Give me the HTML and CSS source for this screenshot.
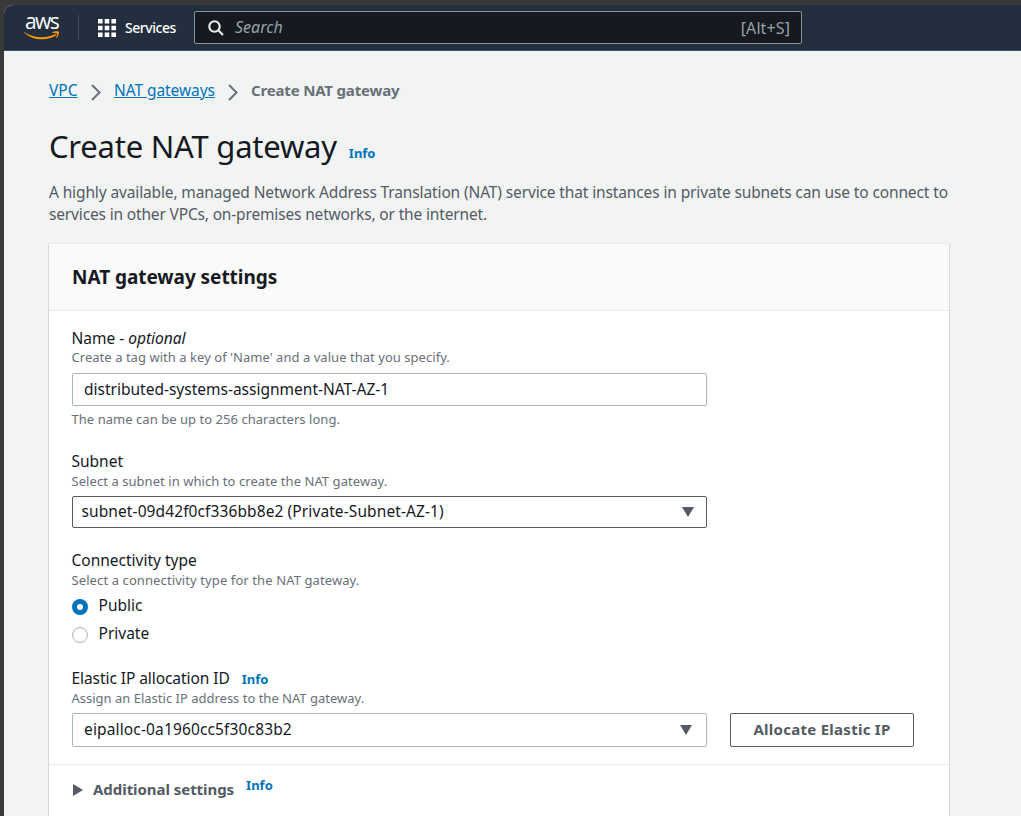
FILE: index.html
```html
<!DOCTYPE html>
<html lang="en">
<head>
<meta charset="utf-8">
<title>Create NAT gateway</title>
<link rel="stylesheet" href="styles.css">
</head>
<body>
<div class="window">
  <header class="topbar">
    <a class="logo"><span class="logo-text">aws</span>
      <svg class="logo-smile" width="36" height="9" viewBox="0 0 36 9"><path d="M.4 1.2C10 7.4 22 7.6 31 3.3c1.1-.5 1.9.5.9 1.2C23 10 9.500 10 .1 1.700c-.3-.4 0-.7.3-.5Z" fill="#f90"/><path d="M28.300 1.400c1.800-1.300 6-1.400 6.500-.7.6.8-.3 4.700-2.300 6.300-.3.200-.6 0-.4-.3.8-1.700 1.400-3.600 1.100-4.100-.4-.5-2.800-.5-4.700-.7-.4 0-.5-.3-.2-.5Z" fill="#f90"/></svg>
    </a>
    <span class="separator"></span>
    <a class="services">
      <svg width="18" height="18" viewBox="0 0 18 18" fill="#fff"><path d="M0 0h4.600v4.600H0zM6.700 0h4.600v4.600H6.700zM13.400 0H18v4.600h-4.600zM0 6.700h4.600v4.600H0zM6.700 6.700h4.600v4.600H6.700zM13.400 6.700H18v4.600h-4.600zM0 13.400h4.600V18H0zM6.700 13.400h4.600V18H6.700zM13.400 13.400H18V18h-4.600z"/></svg>
      <span class="services-text">Services</span>
    </a>
    <div class="search">
      <svg width="16" height="16" viewBox="0 0 16 16" fill="none" stroke="#eaeded" stroke-width="2.100"><circle cx="6.500" cy="6.500" r="5.200"/><path d="m10.300 10.300 4.700 4.700"/></svg>
      <span class="placeholder">Search</span>
      <span class="shortcut">[Alt+S]</span>
    </div>
  </header>
  <main class="content">
    <nav class="breadcrumbs">
      <a class="crumb crumb-vpc">VPC</a>
      <svg class="chevron" width="10" height="17" viewBox="0 0 10 17"><path d="m1 1 7.500 7.500L1 16" fill="none" stroke="#687078" stroke-width="2"/></svg>
      <a class="crumb crumb-nat">NAT gateways</a>
      <svg class="chevron" width="10" height="17" viewBox="0 0 10 17"><path d="m1 1 7.500 7.500L1 16" fill="none" stroke="#687078" stroke-width="2"/></svg>
      <span class="current">Create NAT gateway</span>
    </nav>
    <div class="title-row"><h1 class="title">Create NAT gateway</h1><a class="info">Info</a></div>
    <p class="intro"><span class="intro-first">A highly available, managed Network Address Translation (NAT) service that instances in private subnets can use to connect to</span><br><span class="intro-second">services in other VPCs, on-premises networks, or the internet.</span></p>
    <section class="card">
      <div class="card-header"><h2 class="card-title">NAT gateway settings</h2></div>
      <div class="card-body">
        <div class="field field-name">
          <div class="label">Name - <em class="optional">optional</em></div>
          <div class="help help-name">Create a tag with a key of 'Name' and a value that you specify.</div>
          <div class="control input"><span class="value value-name">distributed-systems-assignment-NAT-AZ-1</span></div>
          <div class="help hint">The name can be up to 256 characters long.</div>
        </div>
        <div class="field field-subnet">
          <div class="label label-subnet">Subnet</div>
          <div class="help help-subnet">Select a subnet in which to create the NAT gateway.</div>
          <div class="control native"><span class="value value-subnet">subnet-09d42f0cf336bb8e2 (Private-Subnet-AZ-1)</span><svg width="12" height="10" viewBox="0 0 12 10"><path d="M0 0h12L6 10z" fill="#545b64"/></svg></div>
        </div>
        <div class="field field-type">
          <div class="label label-type">Connectivity type</div>
          <div class="help help-type">Select a connectivity type for the NAT gateway.</div>
          <div class="radios">
            <label class="radio"><span class="dot dot-on"></span><span class="radio-text">Public</span></label>
            <label class="radio"><span class="dot"></span><span class="radio-text">Private</span></label>
          </div>
        </div>
        <div class="field field-eip">
          <div class="label-row"><span class="label label-eip">Elastic IP allocation ID</span><a class="info">Info</a></div>
          <div class="help help-eip">Assign an Elastic IP address to the NAT gateway.</div>
          <div class="eip-row">
            <div class="control select"><span class="value value-eip">eipalloc-0a1960cc5f30c83b2</span><svg width="12" height="10" viewBox="0 0 12 10"><path d="M0 0h12L6 10z" fill="#545b64"/></svg></div>
            <button class="button"><span class="button-text">Allocate Elastic IP</span></button>
          </div>
        </div>
      </div>
      <div class="additional">
        <svg width="10" height="12" viewBox="0 0 10 12"><path d="M0 0v12l10-6z" fill="#545b64"/></svg>
        <span class="additional-text">Additional settings</span><a class="info">Info</a>
      </div>
    </section>
  </main>
</div>
</body>
</html>
```
FILE: styles.css
```css
* { box-sizing: border-box; }
body { margin: 0; height: 816px; overflow: hidden; background: #393939; color: #16191f; font-family: "Noto Sans", "Open Sans", sans-serif; font-size: 15.5px; white-space: nowrap; }
h1, h2, p { margin: 0; }
svg { display: block; flex: none; }
.window { margin: 5px 0 0 4px; height: 811px; border-top-left-radius: 9px; background: #f2f3f3; overflow: hidden; }
.topbar { height: 46px; background: #232f3e; border-bottom: 1px solid #414d5c; display: flex; align-items: center; color: #fff; }
.logo { width: 36px; margin-left: 20px; height: 46px; padding-top: 7px; }
.logo-text { display: block; height: 19px; padding-left: 1px; font-family: "Open Sans", sans-serif; font-size: 21px; line-height: 19px; letter-spacing: -1.6px; }
.separator { width: 1px; height: 25px; margin-left: 18px; background: #414d5c; }
.services { display: flex; align-items: center; gap: 9px; margin-left: 19px; width: 96px; font-size: 14px; font-weight: 500; }
.services-text { padding-bottom: 1px; letter-spacing: -0.45px; }
.search { display: flex; align-items: center; width: 608px; height: 33px; padding: 0 11px 0 13px; border: 1px solid #879596; border-radius: 2px; background: #16191f; }
.placeholder { margin-left: 11px; padding-bottom: 1px; font-style: italic; color: #95a5a6; font-size: 16px; }
.shortcut { margin-left: auto; color: #95a5a6; font-size: 16px; letter-spacing: 0.1px; }
.content { padding: 27px 0 0 45px; }
.breadcrumbs { display: flex; align-items: center; height: 24px; line-height: 24px; }
.crumb { color: #0073bb; text-decoration: underline; }
.crumb-vpc { width: 29px; }
.crumb-nat { width: 101px; letter-spacing: -0.07px; }
.chevron { margin: 4px 13px 0 13px; }
.current { color: #687078; font-weight: 700; font-size: 15px; letter-spacing: -0.17px; }
.title-row { display: flex; align-items: baseline; height: 44px; line-height: 44px; margin-top: 22px; }
.title { font-size: 31px; font-weight: 400; letter-spacing: -0.23px; }
.info { color: #0073bb; font-weight: 700; font-size: 13px; margin-left: 12px; }
.intro { margin-top: 13px; color: #545b64; line-height: 22px; letter-spacing: -0.13px; }
.intro-second { letter-spacing: -0.16px; }
.card { width: 902px; margin: 18px 0 0 -1px; height: 580px; background: #fff; border: 1px solid #d5dbdb; border-top-color: #eaeded; }
.card-header { height: 67px; padding-left: 23px; border-bottom: 1px solid #eaeded; background: #fafafa; display: flex; align-items: center; }
.card-title { font-size: 19px; line-height: 28px; letter-spacing: -0.05px; }
.card-body { height: 453px; padding: 16px 0 0 22.5px; }
.label { line-height: 22px; }
.help { color: #687078; font-size: 13px; line-height: 16px; letter-spacing: 0.04px; }
.control { display: flex; align-items: center; width: 635px; height: 33px; margin: 8px 0 0 0.5px; padding: 0 14px 0 11px; border: 1px solid #aab7b8; border-radius: 2px; background: #fff; }
.control svg { margin-left: auto; }
.value { padding-bottom: 2px; }
.hint { margin-top: 5px; }
.field-subnet { margin-top: 23px; }
.help-subnet { padding-top: 1px; height: 17px; letter-spacing: 0.06px; }
.native { height: 32px; margin-top: 7px; padding: 0 12px 0 8.5px; border-color: #545b64; }
.value-subnet { letter-spacing: 0.1px; }
.field-type { margin-top: 21px; }
.help-type { padding-top: 1px; height: 17px; letter-spacing: 0.1px; }
.radios { margin: 3px 0 0 0.5px; }
.radio { display: flex; align-items: center; height: 28px; gap: 10.5px; }
.dot { width: 16px; height: 16px; border: 1px solid #aab7b8; border-radius: 50%; margin-top: 3px; }
.dot-on { border: 5px solid #0073bb; }
.field-eip { margin-top: 20px; }
.label-row { display: flex; align-items: baseline; height: 22px; line-height: 22px; }
.label-eip { letter-spacing: -0.07px; }
.help-eip { padding-top: 1px; height: 17px; letter-spacing: 0; }
.eip-row { display: flex; gap: 23px; margin-top: 7px; }
.select { height: 34px; margin-top: 0; }
.value-eip { letter-spacing: 0.14px; }
.button { width: 184px; height: 34px; padding: 0 0 2px; border: 1px solid #545b64; border-radius: 2px; background: #fff; color: #545b64; font: 700 15px "Noto Sans", sans-serif; letter-spacing: 0.27px; }
.additional { display: flex; align-items: center; height: 51px; padding-left: 24px; border-top: 1px solid #eaeded; color: #545b64; }
.additional-text { margin-left: 10px; padding-bottom: 2px; font-weight: 700; font-size: 15px; letter-spacing: -0.05px; }
.additional .info { margin-bottom: 10px; }
```
